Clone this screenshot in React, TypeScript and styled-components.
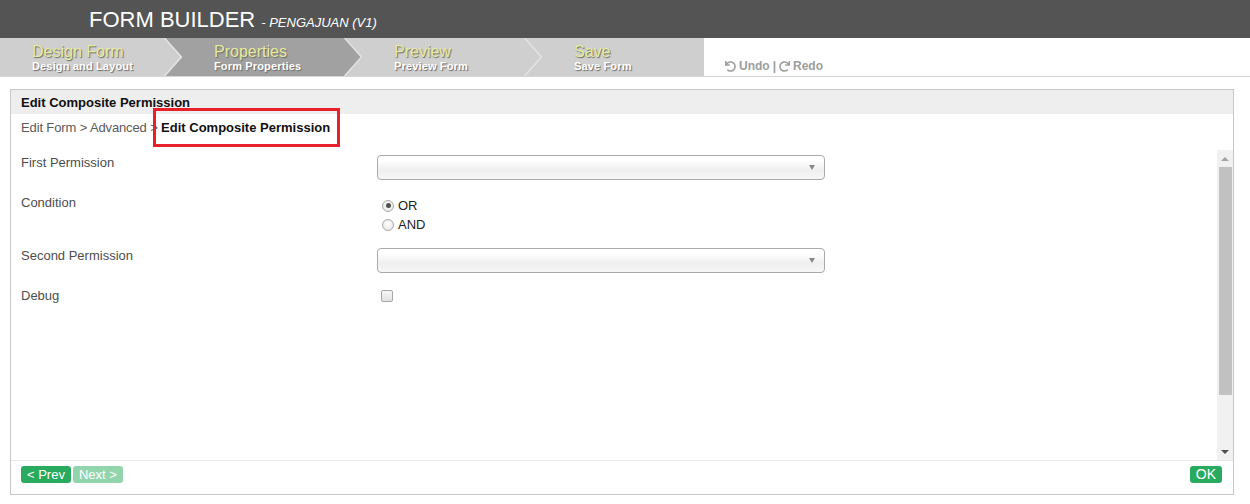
import React from "react";
import styled, { createGlobalStyle, css } from "styled-components";
import { FaUndo, FaRedo } from "react-icons/fa";

const Global = createGlobalStyle`
  html, body { margin: 0; padding: 0; background: #fff; }
  body { font-family: "Liberation Sans", Arial, sans-serif; }
  * { box-sizing: border-box; }
`;

const Page = styled.div`
  width: 1250px;
  height: 504px;
  overflow: hidden;
  display: flex;
  flex-direction: column;
`;

const TopBar = styled.div`
  height: 38px;
  background: #545454;
  display: flex;
  align-items: center;
  padding-left: 89px;
  color: #fff;
`;

const Title = styled.span`
  font-size: 22px;
  line-height: 22px;
  margin-top: 1px;
`;

const SubTitle = styled.span`
  font-size: 13px;
  font-style: italic;
  margin-left: 6px;
  margin-top: 6px;
`;

const StepsRow = styled.div`
  height: 39px;
  display: flex;
  border-bottom: 1px solid #d6d6d6;
`;

const Steps = styled.div`
  width: 704px;
  display: flex;
  background: #cfcfcf;
`;

const Step = styled.div<{ $w: number; $active?: boolean }>`
  position: relative;
  width: ${(p) => p.$w}px;
  flex: none;
  padding: 5px 0 0 32px;
  ${(p) =>
    p.$active &&
    css`
      &::before {
        content: "";
        position: absolute;
        top: 0;
        bottom: 0;
        left: -17px;
        right: 0;
        background: #a1a1a1;
        clip-path: polygon(0 0, calc(100% - 17px) 0, 100% 50%, calc(100% - 17px) 100%, 0 100%, 17px 50%);
        z-index: 0;
      }
    `}
`;

const StepTitle = styled.div`
  position: relative;
  z-index: 1;
  font-size: 16px;
  line-height: 17px;
  color: #e6eb9c;
  text-shadow: 1px 1px 1px #6a6a6a;
`;

const StepSub = styled.div`
  position: relative;
  z-index: 1;
  font-size: 11px;
  font-weight: bold;
  line-height: 13px;
  letter-spacing: 0.15px;
  color: #fff;
  text-shadow: 1px 1px 1px #6a6a6a;
`;

const Chevron = styled.svg`
  position: absolute;
  top: 0;
  right: 0;
  width: 18px;
  height: 38px;
  z-index: 2;
`;

const History = styled.div`
  flex: 1;
  display: flex;
  align-items: flex-end;
  padding: 0 0 3px 21px;
  font-size: 12px;
  font-weight: bold;
  color: #9d9d9d;
  gap: 3px;
  svg { width: 11px; height: 11px; margin-right: 2px; }
`;

const HistItem = styled.span`
  display: inline-flex;
  align-items: center;
  gap: 1px;
`;

const Panel = styled.div`
  margin: 12px 16px 0 10px;
  height: 406px;
  border: 1px solid #c8c8c8;
  display: flex;
  flex-direction: column;
`;

const PanelHeader = styled.div`
  height: 24px;
  background: #eeeeee;
  padding: 1px 10px 0;
  font-size: 13px;
  font-weight: bold;
  color: #111;
  line-height: 24px;
`;

const Breadcrumb = styled.div`
  position: relative;
  height: 36px;
  padding: 1px 10px 0;
  font-size: 13px;
  line-height: 26px;
  color: #5a5a5a;
`;

const Crumbs = styled.span`
  letter-spacing: -0.13px;
`;

const Current = styled.span`
  font-weight: bold;
  color: #111;
`;

const Highlight = styled.div`
  position: absolute;
  left: 142px;
  top: -6px;
  width: 187px;
  height: 39px;
  border: 3px solid #e8202a;
`;

const ScrollArea = styled.div`
  height: 310px;
  display: flex;
`;

const Form = styled.div`
  flex: 1;
  padding: 4px 10px 0 10px;
  display: flex;
  flex-direction: column;
`;

const Row = styled.div<{ $gap: number }>`
  display: grid;
  grid-template-columns: 356px 1fr;
  margin-bottom: ${(p) => p.$gap}px;
`;

const Label = styled.div`
  padding-top: 1px;
  font-size: 13px;
  line-height: 16px;
  color: #4d4d4d;
`;

const Select = styled.div`
  margin-top: 1px;
  width: 448px;
  height: 25px;
  border: 1px solid #aaa;
  border-radius: 4px;
  background: linear-gradient(#ffffff 20%, #efefef 60%, #f6f6f6);
  position: relative;
  display: flex;
  align-items: center;
  justify-content: flex-end;
  padding-right: 9px;
`;

const Caret = styled.span`
  width: 0;
  height: 0;
  border-left: 3.5px solid transparent;
  border-right: 3.5px solid transparent;
  border-top: 5px solid #888;
`;

const Radios = styled.div`
  padding-top: 2px;
  display: flex;
  flex-direction: column;
`;

const RadioLine = styled.label`
  display: flex;
  align-items: center;
  height: 19px;
  font-size: 13px;
  color: #222;
  padding-left: 5px;
  gap: 4px;
`;

const RadioDot = styled.span<{ $checked?: boolean }>`
  width: 12px;
  height: 12px;
  border-radius: 50%;
  border: 1px solid #a9a9a9;
  background: radial-gradient(circle at 50% 40%, #ffffff, #e2e2e2);
  display: flex;
  align-items: center;
  justify-content: center;
  &::after {
    content: "";
    display: ${(p) => (p.$checked ? "block" : "none")};
    width: 5px;
    height: 5px;
    border-radius: 50%;
    background: #505050;
  }
`;

const Check = styled.span`
  margin: 3px 0 0 4px;
  width: 12px;
  height: 12px;
  border: 1px solid #a5a5a5;
  border-radius: 2px;
  background: linear-gradient(#f7f7f7, #e2e2e2);
`;

const ScrollBar = styled.div`
  width: 16px;
  background: #f1f1f1;
  display: flex;
  flex-direction: column;
`;

const ScrollBtn = styled.div<{ $down?: boolean }>`
  height: 17px;
  display: flex;
  align-items: center;
  justify-content: center;
  &::after {
    content: "";
    width: 0;
    height: 0;
    border-left: 4px solid transparent;
    border-right: 4px solid transparent;
    ${(p) => (p.$down ? "border-top: 4px solid #505050;" : "border-bottom: 4px solid #a3a3a3;")}
  }
`;

const Track = styled.div`
  flex: 1;
  padding: 0 1px 0 2px;
`;

const Thumb = styled.div`
  height: 228px;
  background: #c1c1c1;
`;

const Footer = styled.div`
  flex: 1;
  border-top: 1px solid #e6e6e6;
  display: flex;
  align-items: flex-start;
  padding: 5px 11px 0 10px;
  gap: 2px;
`;

const Btn = styled.span<{ $disabled?: boolean; $big?: boolean }>`
  height: 17px;
  line-height: 17px;
  padding: 0 6px;
  border-radius: 3px;
  font-size: ${(p) => (p.$big ? 14 : 13)}px;
  color: #fff;
  background: ${(p) => (p.$disabled ? "#92d5ad" : "#28ab5f")};
`;

const Spacer = styled.div`
  flex: 1;
`;

const steps = [
  { t: "Design Form", s: "Design and Layout", w: 182 },
  { t: "Properties", s: "Form Properties", w: 180, active: true },
  { t: "Preview", s: "Preview Form", w: 180 },
  { t: "Save", s: "Save Form", w: 162, last: true },
];

export default function App() {
  return (
    <Page>
      <Global />
      <TopBar>
        <Title>FORM BUILDER</Title>
        <SubTitle>- PENGAJUAN (V1)</SubTitle>
      </TopBar>
      <StepsRow>
        <Steps>
          {steps.map((st) => (
            <Step key={st.t} $w={st.w} $active={st.active}>
              <StepTitle>{st.t}</StepTitle>
              <StepSub>{st.s}</StepSub>
              {!st.last && (
                <Chevron viewBox="0 0 18 38">
                  <polyline points="0.5,0 17.5,19 0.5,38" fill="none" stroke="#e4e4e4" strokeWidth="1.5" />
                </Chevron>
              )}
            </Step>
          ))}
        </Steps>
        <History>
          <HistItem>
            <FaUndo />
            Undo
          </HistItem>
          <span>|</span>
          <HistItem>
            <FaRedo />
            Redo
          </HistItem>
        </History>
      </StepsRow>
      <Panel>
        <PanelHeader>Edit Composite Permission</PanelHeader>
        <Breadcrumb>
          <Crumbs>Edit Form &gt; Advanced &gt; </Crumbs>
          <Current>Edit Composite Permission</Current>
          <Highlight />
        </Breadcrumb>
        <ScrollArea>
          <Form>
            <Row $gap={14}>
              <Label>First Permission</Label>
              <Select>
                <Caret />
              </Select>
            </Row>
            <Row $gap={13}>
              <Label>Condition</Label>
              <Radios>
                <RadioLine>
                  <RadioDot $checked />
                  OR
                </RadioLine>
                <RadioLine>
                  <RadioDot />
                  AND
                </RadioLine>
              </Radios>
            </Row>
            <Row $gap={14}>
              <Label>Second Permission</Label>
              <Select>
                <Caret />
              </Select>
            </Row>
            <Row $gap={0}>
              <Label>Debug</Label>
              <Check />
            </Row>
          </Form>
          <ScrollBar>
            <ScrollBtn />
            <Track>
              <Thumb />
            </Track>
            <ScrollBtn $down />
          </ScrollBar>
        </ScrollArea>
        <Footer>
          <Btn>&lt; Prev</Btn>
          <Btn $disabled>Next &gt;</Btn>
          <Spacer />
          <Btn $big>OK</Btn>
        </Footer>
      </Panel>
    </Page>
  );
}
